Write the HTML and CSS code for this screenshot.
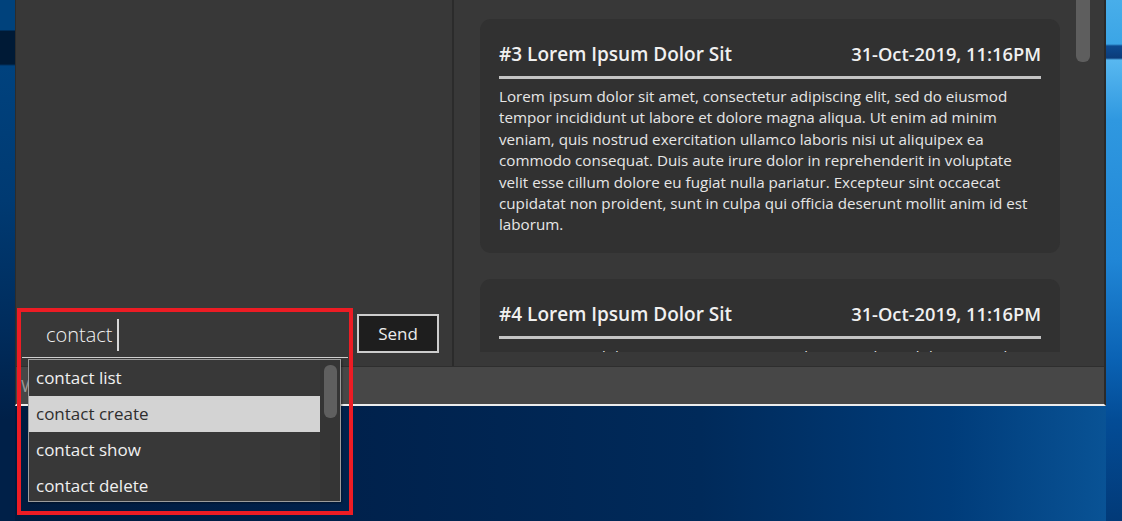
FILE: index.html
```html
<!DOCTYPE html>
<html lang="en">
<head>
<meta charset="utf-8">
<title>Contacts</title>
<link rel="stylesheet" href="styles.css">
</head>
<body>
<div class="window">
  <div class="content">
    <div class="left-panel">
      <div class="input-row">
        <div class="command-box"><span class="command-text">contact</span><span class="caret"></span></div>
        <button class="send-btn">Send</button>
      </div>
      <div class="suggestions">
        <ul class="suggestion-list">
          <li class="suggestion">contact list</li>
          <li class="suggestion selected">contact create</li>
          <li class="suggestion">contact show</li>
          <li class="suggestion">contact delete</li>
        </ul>
        <div class="sugg-scroll"><div class="sugg-thumb"></div></div>
      </div>
    </div>
    <div class="divider"></div>
    <div class="right-panel">
      <div class="feed">
        <article class="card">
          <header class="card-head">
            <h2 class="card-title">#3 Lorem Ipsum Dolor Sit</h2>
            <span class="card-date">31-Oct-2019, 11:16PM</span>
          </header>
          <p class="card-body">Lorem ipsum dolor sit amet, consectetur adipiscing elit, sed do eiusmod tempor incididunt ut labore et dolore magna aliqua. Ut enim ad minim veniam, quis nostrud exercitation ullamco laboris nisi ut aliquipex ea commodo consequat. Duis aute irure dolor in reprehenderit in voluptate velit esse cillum dolore eu fugiat nulla pariatur. Excepteur sint occaecat cupidatat non proident, sunt in culpa qui officia deserunt mollit anim id est laborum.</p>
        </article>
        <article class="card">
          <header class="card-head">
            <h2 class="card-title">#4 Lorem Ipsum Dolor Sit</h2>
            <span class="card-date">31-Oct-2019, 11:16PM</span>
          </header>
          <p class="card-body">Lorem ipsum dolor sit amet, consectetur adipiscing elit, sed do eiusmod tempor incididunt ut labore et dolore magna aliqua. Ut enim ad minim veniam, quis nostrud exercitation ullamco laboris nisi ut aliquipex ea commodo consequat.</p>
        </article>
      </div>
      <div class="scrollbar"><div class="scroll-thumb"></div></div>
    </div>
  </div>
  <div class="status-bar"><span class="status-text">Welcome</span></div>
</div>
<div class="highlight-box"></div>
</body>
</html>
```

FILE: styles.css
```css
* { box-sizing: border-box; }

html, body {
  margin: 0;
  padding: 0;
}

body {
  width: 1122px;
  height: 521px;
  overflow: hidden;
  position: relative;
  font-family: "Open Sans", "Liberation Sans", sans-serif;
  background:
    linear-gradient(to bottom, #00427c 0, #00427c 30px, #001a36 31px, #001a36 64px, #00427e 66px, #003a72 200px, #002c5c 330px, #002048 420px) left top / 15px 521px no-repeat,
    linear-gradient(to bottom, #48aeea 0, #3ba5e6 44px, #0d4a90 46px, #0b3c7a 58px, #58b8f0 60px, #2f98e0 120px, #2086d6 260px, #0a62b4 360px, #034c96 420px, #023a78 521px) right top / 16px 521px no-repeat,
    linear-gradient(to right, #001b3e 0, #00204a 300px, #002a5a 700px, #003c7a 950px, #0a5598 1122px);
}

.window {
  margin-left: 15px;
  width: 1091px;
  height: 406px;
  display: flex;
  flex-direction: column;
  border-left: 1px solid #2c2c2c;
  border-right: 2px solid #2a2a2a;
  border-bottom: 2px solid #ececec;
}

.content {
  height: 366px;
  display: flex;
  flex: none;
}

.left-panel {
  position: relative;
  width: 436px;
  background: #383838;
  display: flex;
  flex-direction: column;
  justify-content: flex-end;
  padding: 0 13px 8px 6px;
  z-index: 2;
}

.input-row {
  display: flex;
  align-items: flex-start;
}

.command-box {
  width: 326px;
  height: 46px;
  border-bottom: 1px solid #cfcfcf;
  display: flex;
  align-items: center;
  padding-left: 24px;
}

.command-text {
  font-size: 20px;
  font-weight: 300;
  color: #f2f2f2;
}

.caret {
  width: 2px;
  height: 32px;
  background: #d8d8d8;
  margin-left: 4px;
}

.send-btn {
  margin: 2px 0 0 9px;
  width: 82px;
  height: 39px;
  background: #1e1e1e;
  border: 2px solid #cdcdcd;
  color: #ececec;
  font-family: "Open Sans", "Liberation Sans", sans-serif;
  font-size: 17px;
  padding: 0;
}

.suggestions {
  position: absolute;
  left: 12px;
  top: 359px;
  width: 313px;
  height: 143px;
  border: 1px solid #9c9c9c;
  background: #363636;
  overflow: hidden;
  display: flex;
  box-shadow: 1px 1px 2px rgba(0,0,0,0.4);
}

.suggestion-list {
  list-style: none;
  margin: 0;
  padding: 0;
  flex: 1;
}

.suggestion {
  height: 36px;
  line-height: 36px;
  padding-left: 7px;
  font-size: 17px;
  color: #f0f0f0;
  background: #383838;
}

.suggestion.selected {
  background: #d3d3d3;
  color: #2e2e2e;
}

.sugg-scroll {
  width: 20px;
  background: #353535;
  padding: 5px 3px 0 4px;
}

.sugg-thumb {
  height: 53px;
  border-radius: 6px;
  background: #5f5f5f;
}

.divider {
  width: 2px;
  background: #2b2b2b;
}

.right-panel {
  flex: 1;
  background: #383838;
  display: flex;
  padding-bottom: 14px;
}

.feed {
  flex: 1;
  overflow: hidden;
  padding: 19px 0 0 26px;
  display: flex;
  flex-direction: column;
  gap: 26px;
}

.card {
  width: 580px;
  flex: none;
  background: #313131;
  border-radius: 11px;
  padding: 22px 19px 17px 19px;
}

.card-head {
  display: flex;
  justify-content: space-between;
  align-items: baseline;
  height: 26px;
  margin-bottom: 9px;
}

.card-title {
  margin: 0;
  font-size: 19px;
  font-weight: 600;
  line-height: 26px;
  color: #f0f0f0;
}

.card-date {
  font-size: 18.3px;
  font-weight: 600;
  line-height: 26px;
  color: #f0f0f0;
}

.card-body {
  margin: 0;
  border-top: 3px solid #c4c4c4;
  padding-top: 7px;
  font-size: 15.2px;
  line-height: 21.4px;
  color: #e6e6e6;
}

.scrollbar {
  width: 28px;
}

.scroll-thumb {
  width: 14px;
  height: 62px;
  border-radius: 0 0 6px 6px;
  background: #5e5e5e;
}

.status-bar {
  height: 38px;
  background: #474747;
  border-top: 1px solid #2e2e2e;
  padding-left: 5px;
  display: flex;
  align-items: center;
  flex: none;
}

.status-text {
  font-size: 17px;
  color: #9a9a9a;
}

.highlight-box {
  position: absolute;
  left: 17px;
  top: 308px;
  width: 336px;
  height: 207px;
  border: 4px solid #ed1c24;
  pointer-events: none;
  z-index: 5;
}
```
